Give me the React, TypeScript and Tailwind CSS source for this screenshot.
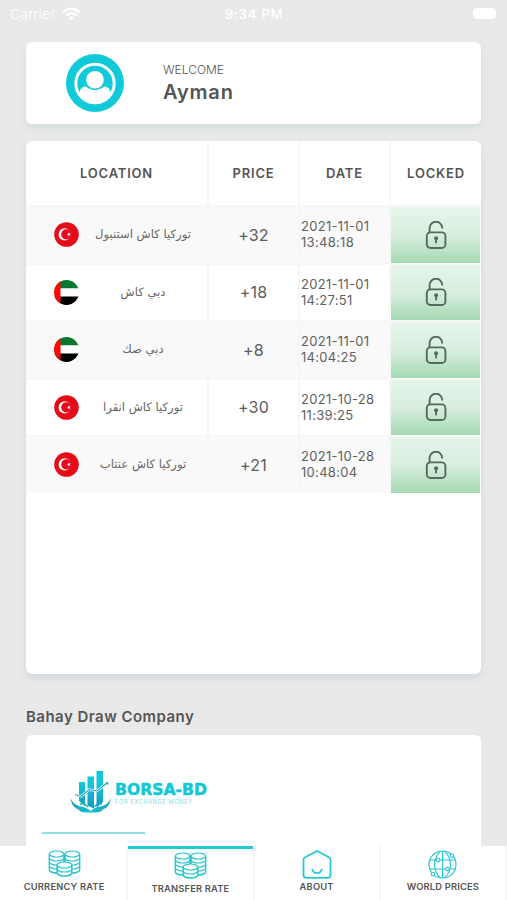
import React, { useState } from "react";

type Country = "tr" | "ae";

interface Transfer {
  country: Country;
  location: string;
  price: string;
  date: string;
  time: string;
}

const transfers: Transfer[] = [
  { country: "tr", location: "توركيا كاش استنبول", price: "+32", date: "2021-11-01", time: "13:48:18" },
  { country: "ae", location: "دبي كاش", price: "+18", date: "2021-11-01", time: "14:27:51" },
  { country: "ae", location: "دبي صك", price: "+8", date: "2021-11-01", time: "14:04:25" },
  { country: "tr", location: "توركيا كاش انقرا", price: "+30", date: "2021-10-28", time: "11:39:25" },
  { country: "tr", location: "توركيا كاش عنتاب", price: "+21", date: "2021-10-28", time: "10:48:04" },
];

const WifiIcon = () => (
  <svg className="w-[19px] h-[14px]" viewBox="0 0 19 14" fill="none" stroke="#fff" strokeWidth="2.6">
    <path d="M1.2 5.2a11.8 11.8 0 0 1 16.6 0" />
    <path d="M4.4 8.4a7.2 7.2 0 0 1 10.2 0" />
    <path d="M9.5 13.6 6.7 10.8a4 4 0 0 1 5.6 0z" fill="#fff" stroke="none" />
  </svg>
);

const Avatar = () => (
  <svg className="w-[58px] h-[58px]" viewBox="0 0 58 58">
    <circle cx="29" cy="29" r="29" fill="#11cad9" />
    <circle cx="29" cy="29.5" r="19.2" fill="#11cad9" stroke="#fff" strokeWidth="3" />
    <path d="M13.5 39c.4-4.300 3-6.500 6.500-6.500 2.500 2.200 5.500 3.500 9 3.500s6.500-1.300 9-3.500c3.500 0 6.100 2.200 6.500 6.500A18 18 0 0 1 29 49a18 18 0 0 1-15.500-10z" fill="#fff" />
    <circle cx="29" cy="25.8" r="9.3" fill="#fff" stroke="#11cad9" strokeWidth="1" />
  </svg>
);

const Flag = ({ country }: { country: Country }) => {
  if (country === "tr") {
    return (
      <svg className="w-[25px] h-[25px] shrink-0" viewBox="0 0 25 25">
        <circle cx="12.5" cy="12.5" r="12.3" fill="#e70a19" />
        <circle cx="10.7" cy="12.4" r="6.1" fill="#fff" />
        <circle cx="12.3" cy="12.4" r="5.1" fill="#e70a19" />
        <path d="m12.8 12.400 1.500-.5v-1.500l.9 1.200 1.500-.5-.9 1.300.9 1.300-1.500-.5-.9 1.200v-1.500z" fill="#fff" />
      </svg>
    );
  }
  return (
    <svg className="w-[25px] h-[25px] shrink-0 rounded-full" viewBox="0 0 25 25">
      <path d="M0 0h25v8.500H0z" fill="#08772f" />
      <path d="M0 8.500h25v8H0z" fill="#fff" />
      <path d="M0 16.500h25V25H0z" fill="#000" />
      <path d="M0 0h6.500v25H0z" fill="#fb0a05" />
    </svg>
  );
};

const UnlockedIcon = () => (
  <svg className="w-[22px] h-[28px]" viewBox="0 0 22 28" fill="none" stroke="#526c5c" strokeWidth="1.9" strokeLinecap="round">
    <rect x="1.8" y="11.4" width="18.6" height="15.6" rx="3.6" />
    <path d="M4.600 11.200V7.400a6.300 6.300 0 0 1 12.600-.7" />
    <circle cx="11.1" cy="17.2" r="2" fill="#526c5c" stroke="none" />
    <path d="M11.100 17.500v4" />
  </svg>
);

const BorsaLogo = () => (
  <svg className="block w-[150px] h-[44px]" viewBox="0 0 150 44">
    <defs>
      <linearGradient id="bars" x1="0" y1="0" x2="0" y2="1">
        <stop offset="0.3" stopColor="#12c9d9" />
        <stop offset="1" stopColor="#1696b8" />
      </linearGradient>
      <linearGradient id="hands" x1="0" y1="0" x2="1" y2="0">
        <stop offset="0" stopColor="#189cb8" />
        <stop offset="0.5" stopColor="#12c4d4" />
        <stop offset="1" stopColor="#189cb8" />
      </linearGradient>
    </defs>
    <path d="M9 12h6v24l-6-5zM17.500 6.500h6.500v32l-6.500-3zM26.500 1h6.500v31l-6.500 6z" fill="url(#bars)" />
    <path d="m5 24.500 6 2 8-7 8 1.500L37 13" fill="none" stroke="#fff" strokeWidth="2.4" />
    <path d="m5 24.500 6 2 8-7 8 1.500L37 13" fill="none" stroke="#1aa2ba" strokeWidth="1.1" />
    <path d="m35.500 12.800 3-1-.6 3.500z" fill="#1aa2ba" />
    <path d="M.7 28c1 3.500 3.500 6.500 8 8 5 1 9 2 12 5 3-3 7-4 12-5 4.500-1.500 7-4.500 8-8-.3 6-3.500 10-8 11.500-1 2.500-4 3-12 3s-11-.5-12-3C4.200 38 1 34 .7 28z" fill="url(#hands)" />
    <path d="M10 34.500c2-1.700 5-1 8 2.500M32 34.500c-2-1.700-5-1-8 2.500" fill="none" stroke="#11b3c8" strokeWidth="1.4" />
    <text x="45" y="25" textLength="92" lengthAdjust="spacingAndGlyphs" className="font-['DejaVu_Sans'] font-bold text-[16px] leading-none" fill="#12c7d7" stroke="#12c7d7" strokeWidth="0.5">BORSA-BD</text>
    <text x="45" y="33.6" textLength="77" className="font-['Inter'] text-[5.5px] leading-none" fill="#7fdce5">FOR EXCHANGE MONEY</text>
  </svg>
);

const CoinStack = ({ x, y, rx, layers }: { x: number; y: number; rx: number; layers: number }) => (
  <g>
    <path d={`M${x - rx} ${y}v${layers * 4}a${rx} 3 0 0 0 ${rx * 2} 0v${-layers * 4}z`} fill="#fff" />
    <ellipse cx={x} cy={y} rx={rx} ry="3" fill="#fff" />
    {Array.from({ length: layers }, (_, i) => (
      <path key={i} d={`M${x - rx} ${y + i * 4}v4a${rx} 3 0 0 0 ${rx * 2} 0v-4`} fill="none" />
    ))}
  </g>
);

const CoinsIcon = () => (
  <svg className="w-[33px] h-[27px]" viewBox="0 0 33 27" stroke="#26c6d3" strokeWidth="1.2">
    <CoinStack x={8.7} y={4} rx={7.3} layers={4} />
    <CoinStack x={24.3} y={4} rx={7.3} layers={4} />
    <CoinStack x={16.5} y={15} rx={7.3} layers={2} />
  </svg>
);

const AboutIcon = () => (
  <svg className="w-[30px] h-[29px]" viewBox="0 0 30 29" fill="none" stroke="#26c9d4" strokeWidth="1.8" strokeLinejoin="round" strokeLinecap="round">
    <path d="M1.500 10c0-1.500.4-2.100 1.600-2.800L15 1l11.900 6.200c1.200.7 1.600 1.300 1.600 2.800v15c0 2-.8 2.800-2.800 2.800H4.300c-2 0-2.800-.8-2.800-2.800z" />
    <path d="M10.300 19.500c1.300 4.700 8.100 4.700 9.400 0" />
  </svg>
);

const GlobeIcon = () => (
  <svg className="w-[29px] h-[29px]" viewBox="0 0 29 29" fill="none" stroke="#26c6d3" strokeWidth="1.15">
    <circle cx="14.5" cy="14.5" r="13.5" />
    <path d="M12.500 1.200c-8 8-8 19 0 26.600M16.500 1.200c8 8 8 19 0 26.600M14.500 1v27M1.500 10h26M1.500 19h26" />
    <g fill="#fff">
      <circle cx="24" cy="5.5" r="1.8" />
      <circle cx="10" cy="10" r="1.8" />
      <circle cx="19.5" cy="19" r="1.8" />
      <circle cx="5" cy="24" r="1.8" />
    </g>
  </svg>
);

const tabs = [
  { label: "CURRENCY RATE", icon: <CoinsIcon /> },
  { label: "TRANSFER RATE", icon: <CoinsIcon /> },
  { label: "ABOUT", icon: <AboutIcon /> },
  { label: "WORLD PRICES", icon: <GlobeIcon /> },
];

const columns = "grid grid-cols-[183px_91px_91px_90px]";

const App: React.FC = () => {
  const [activeTab, setActiveTab] = useState(1);

  return (
    <div className="w-[507px] h-[900px] flex flex-col overflow-hidden bg-[#e9e9e9] font-['Inter',sans-serif] text-[#555]">
      <header className="h-[42px] shrink-0 grid grid-cols-3 items-start px-2.5 pt-[5px] text-[13.5px] leading-[18px] text-white">
        <div className="flex items-center gap-1.5">
          <span className="font-light tracking-[0.4px]">Carrier</span>
          <WifiIcon />
        </div>
        <span className="pl-px text-center font-medium tracking-[0.6px]">9:34 PM</span>
        <div className="flex justify-end pt-[3px] pr-px">
          <div className="w-[23px] h-[11px] rounded-[4px] bg-white" />
        </div>
      </header>

      <main className="flex-1 min-h-0 overflow-hidden px-[26px]">
        <section className="h-[82px] flex items-center rounded-[6px] bg-white pl-[39.5px] shadow-[0_4px_7px_#d3dddf]">
          <Avatar />
          <div className="ml-[39.5px]">
            <p className="text-[12px] leading-[16px] font-light text-[#555]">WELCOME</p>
            <h1 className="mt-0.5 text-[20px] leading-[24px] font-semibold tracking-[0.8px]">Ayman</h1>
          </div>
        </section>

        <section className="mt-[17px] h-[533px] overflow-hidden rounded-[6px] bg-white shadow-[0_4px_7px_#d0d7db]">
          <div className={`${columns} h-[64px] text-[13px] font-semibold tracking-[0.8px] text-center leading-[64px]`}>
            <div className="border-r-2 border-[#f7f7f7]">LOCATION</div>
            <div className="border-r-2 border-[#f7f7f7]">PRICE</div>
            <div className="border-r-2 border-[#f7f7f7]">DATE</div>
            <div>LOCKED</div>
          </div>
          {transfers.map((t) => (
            <div key={t.date + t.time} className={`${columns} h-[57.5px] border-t-2 border-[#f7f7f7] odd:bg-white even:bg-[#f9f9f9]`}>
              <div className="flex items-center border-r-2 border-[#f6f6f6] pl-[28px]">
                <Flag country={t.country} />
                <span dir="rtl" className="flex-1 text-center whitespace-nowrap font-['DejaVu_Sans',sans-serif] text-[11.6px] text-[#666]">{t.location}</span>
              </div>
              <div className="flex items-center justify-center border-r-2 border-[#f6f6f6] text-[16px] tracking-[0.2px] text-[#5c5c5c]">{t.price}</div>
              <div className="flex flex-col justify-center border-r-2 border-[#f6f6f6] pl-px pb-px text-[13px] leading-[16px] tracking-[0.3px] text-[#616161]">
                <span>{t.date}</span>
                <span>{t.time}</span>
              </div>
              <div className="mr-px flex items-center justify-center bg-linear-to-b from-[#e6f5eb] from-0% via-[#d8eedf] via-50% to-[#a4d9b3]">
                <UnlockedIcon />
              </div>
            </div>
          ))}
        </section>

        <h2 className="mt-[32px] text-[15px] leading-[22px] font-semibold tracking-[0.47px]">Bahay Draw Company</h2>
        <section className="mt-[7px] h-[130px] rounded-t-[6px] bg-white pt-[35px] pl-4">
          <div className="pl-[28px]">
            <BorsaLogo />
          </div>
          <div className="mt-[18px] w-[103px] h-[2px] bg-[#90e0e6]" />
        </section>
      </main>

      <nav className="h-[54px] shrink-0 grid grid-cols-4 bg-white pl-0.5">
        {tabs.map((tab, i) => (
          <button
            key={tab.label}
            onClick={() => setActiveTab(i)}
            className="flex flex-col items-center border-r-2 border-r-[#f6f6f6] text-[9.3px] leading-[12px] font-semibold tracking-[0.2px] whitespace-nowrap"
          >
            <span className={`w-full h-[3px] ${i === activeTab ? "bg-[#1fcbd0] mb-[3px]" : "mb-px"}`} />
            <span className="h-[31px] flex items-start">{tab.icon}</span>
            {tab.label}
          </button>
        ))}
      </nav>
    </div>
  );
};

export default App;
